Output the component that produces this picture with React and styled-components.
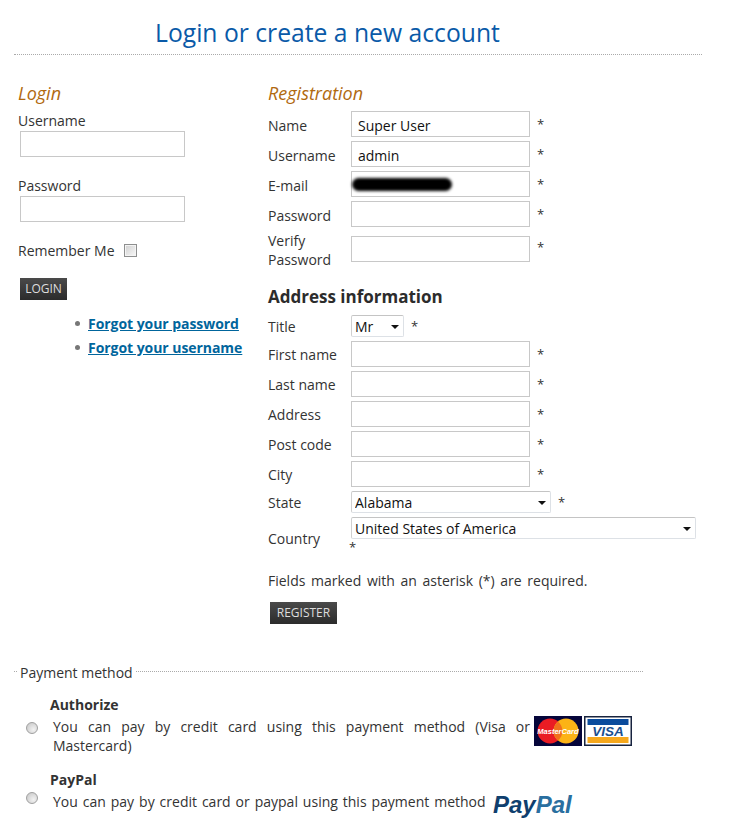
import styled, { createGlobalStyle } from 'styled-components'

const GlobalStyle = createGlobalStyle`
  html, body { margin: 0; padding: 0; background: #fff; }
  body {
    font-family: "Open Sans", "Liberation Sans", sans-serif;
    font-size: 14px;
    color: #333;
  }
`

const Page = styled.div`
  width: 735px;
  height: 823px;
  overflow: hidden;
  box-sizing: border-box;
  padding-top: 17px;
`

const Title = styled.h1`
  margin: 0 33px 0 14px;
  padding: 0 0 5px 141px;
  height: 32px;
  font-size: 24.7px;
  line-height: 32px;
  font-weight: 400;
  color: #0a5aa8;
  border-bottom: 1px dotted #aaa;
`

const Columns = styled.div`
  display: flex;
  padding: 26px 0 0 18px;
  height: 609px;
  box-sizing: border-box;
`

const LoginCol = styled.div`
  width: 250px;
  flex: none;
`

const RegCol = styled.div`
  width: 430px;
  flex: none;
`

const SubHead = styled.h2`
  margin: 0 0 6px;
  font-size: 18px;
  line-height: 24px;
  font-weight: 400;
  font-style: italic;
  color: #b0690f;
`

const StackLabel = styled.label`
  display: block;
  line-height: 20px;
  height: 20px;
`

const Input = styled.input`
  display: block;
  box-sizing: border-box;
  width: ${p => p.$w || 179}px;
  height: 26px;
  margin: 0;
  padding: 2px 6px 0;
  border: 1px solid #c8c8c8;
  background: #fff;
  font: inherit;
  color: #111;
  outline: none;
`

const LoginField = styled.div`
  margin-bottom: 19px;
  ${Input} { margin: 0 0 0 2px; }
`

const RememberRow = styled.div`
  display: flex;
  align-items: center;
  gap: 9px;
  height: 20px;
  margin-top: -1px;
`

const Check = styled.input`
  appearance: none;
  box-sizing: border-box;
  width: 13px;
  height: 13px;
  margin: 0;
  border: 1px solid #8e8f8f;
  background: linear-gradient(135deg, #d0d0d0, #f8f8f8);
  box-shadow: inset 0 0 0 1px #f4f4f4;
`

const DarkButton = styled.button`
  display: block;
  height: 22px;
  width: ${p => p.$w}px;
  margin: ${p => p.$m};
  padding: 0;
  border: 0;
  background: linear-gradient(#4a4a4a, #2b2b2b);
  color: #ddd;
  font-family: inherit;
  font-size: 12px;
  line-height: 22px;
  text-align: center;
`

const LinkList = styled.ul`
  margin: 12px 0 0;
  padding: 0 0 0 70px;
  list-style: none;
`

const LinkItem = styled.li`
  position: relative;
  height: 24px;
  line-height: 24px;
  &::before {
    content: '';
    position: absolute;
    left: -13px;
    top: 9px;
    width: 5px;
    height: 5px;
    border-radius: 50%;
    background: #777;
  }
`

const HelpLink = styled.a`
  color: #00659c;
  font-weight: 700;
  font-size: 14px;
  letter-spacing: -0.05px;
  text-decoration: underline;
`

const Row = styled.div`
  display: flex;
  align-items: ${p => p.$top ? 'flex-start' : 'center'};
  height: ${p => p.$h || 26}px;
  margin-bottom: ${p => p.$mb ?? 4}px;
`

const RowLabel = styled.label`
  width: 83px;
  flex: none;
  line-height: 19px;
  margin-top: ${p => p.$mt ?? 0}px;
`

const Star = styled.span`
  margin-left: ${p => p.$ml || 7}px;
  margin-top: ${p => p.$mt ?? -1}px;
  font-size: 13px;
`

const FieldWrap = styled.div`
  position: relative;
`

const BlurMark = styled.div`
  position: absolute;
  left: 1px;
  top: 7px;
  width: 100px;
  height: 13px;
  border-radius: 7px;
  background: #000;
  filter: blur(1.5px);
`

const AddressHead = styled.h3`
  margin: 11px 0 6px;
  font-size: 17px;
  line-height: 24px;
  font-weight: 700;
  color: #2c2c2c;
`

const SelectBox = styled.div`
  position: relative;
  width: ${p => p.$w}px;
  &::after {
    content: '';
    position: absolute;
    right: 5px;
    top: 10px;
    border-left: 4px solid transparent;
    border-right: 4px solid transparent;
    border-top: 4px solid #111;
    pointer-events: none;
  }
`

const Select = styled.select`
  appearance: none;
  display: block;
  box-sizing: border-box;
  width: 100%;
  height: 22px;
  margin: 0;
  padding: 0 0 0 3px;
  border: 1px solid #dde1e6;
  border-top-color: #c4c4c4;
  border-left-color: #d0d0d0;
  border-radius: 2px;
  background: #fff;
  font: inherit;
  color: #111;
`

const CountryStar = styled.div`
  margin: -1px 0 0 81px;
  height: 18px;
  line-height: 18px;
  font-size: 13px;
`

const Note = styled.p`
  margin: 15px 0 0;
  line-height: 20px;
  word-spacing: 2px;
`

const PaymentHead = styled.div`
  position: relative;
  margin: 0 92px 0 14px;
  height: 18px;
  &::before {
    content: '';
    position: absolute;
    left: 0;
    right: 0;
    top: 7px;
    border-top: 1px dotted #aaa;
  }
`

const PaymentTitle = styled.span`
  position: relative;
  top: -1px;
  margin-left: 4px;
  padding: 0 2px;
  background: #fff;
  line-height: 18px;
`

const Method = styled.div`
  margin: ${p => p.$mt}px 0 0 26px;
  width: 606px;
  display: grid;
  grid-template-columns: 27px 1fr;
`

const MethodName = styled.div`
  grid-column: 1 / 3;
  padding-left: 24px;
  font-weight: 700;
  line-height: 20px;
`

const Radio = styled.input`
  appearance: none;
  align-self: start;
  width: 12px;
  height: 12px;
  margin: ${p => p.$m};
  border: 1px solid #a0a0a0;
  border-radius: 50%;
  background: radial-gradient(circle at 65% 65%, #f2f2f2, #c4c4c4);
`

const MethodText = styled.div`
  line-height: 19px;
  padding-top: 2px;
  text-align: justify;
`

const PayPalText = styled.div`
  display: flex;
  align-items: flex-start;
  line-height: 19px;
  padding-top: 2px;
  word-spacing: 1.3px;
  white-space: nowrap;
`

const CardLogos = styled.span`
  float: right;
  display: flex;
  gap: 2px;
  margin: -1px 0 0 4px;
`

const PayPalMark = styled.span`
  display: inline-flex;
  margin: -1px 0 0 7px;
`

function MasterCardLogo() {
  return (
    <svg width="48" height="30" viewBox="0 0 48 30">
      <rect width="48" height="30" fill="#05053a" />
      <circle cx="16" cy="15" r="12.5" fill="#ea1c24" />
      <circle cx="32" cy="15" r="12.5" fill="#fcb316" />
      <path d="M24 5.5a12.5 12.5 0 0 1 0 19a12.5 12.5 0 0 1 0-19z" fill="#f0701c" />
      <text x="24" y="17.5" fontSize="7.5" fontWeight="700" fontStyle="italic" fill="#fff" textAnchor="middle" fontFamily="Liberation Sans">MasterCard</text>
    </svg>
  )
}

function VisaLogo() {
  return (
    <svg width="48" height="30" viewBox="0 0 48 30">
      <rect width="48" height="30" fill="#17233f" />
      <rect x="1.5" y="1.5" width="45" height="27" fill="#fff" />
      <rect x="3.5" y="3" width="41" height="6" fill="#0a4b9c" />
      <rect x="3.5" y="21" width="41" height="6" fill="#f6a81c" />
      <text x="24" y="20" fontSize="13.5" fontWeight="700" fontStyle="italic" fill="#1a4f8f" textAnchor="middle" fontFamily="Liberation Sans">VISA</text>
    </svg>
  )
}

function PayPalLogo() {
  return (
    <svg width="86" height="29" viewBox="0 0 86 29">
      <text y="22" fontSize="24" fontWeight="700" fontStyle="italic" fontFamily="Liberation Sans">
        <tspan fill="#0f3f6e">Pay</tspan><tspan fill="#2a6fa0">Pal</tspan>
      </text>
    </svg>
  )
}

const fieldRows = ['First name', 'Last name', 'Address', 'Post code', 'City']

export default function App() {
  return (
    <Page>
      <GlobalStyle />
      <Title>Login or create a new account</Title>
      <Columns>
        <LoginCol>
          <SubHead>Login</SubHead>
          <LoginField>
            <StackLabel>Username</StackLabel>
            <Input $w={165} />
          </LoginField>
          <LoginField>
            <StackLabel>Password</StackLabel>
            <Input $w={165} type="password" />
          </LoginField>
          <RememberRow>
            Remember Me
            <Check type="checkbox" />
          </RememberRow>
          <DarkButton $w={47} $m="18px 0 0 2px">LOGIN</DarkButton>
          <LinkList>
            <LinkItem><HelpLink href="#">Forgot your password</HelpLink></LinkItem>
            <LinkItem><HelpLink href="#">Forgot your username</HelpLink></LinkItem>
          </LinkList>
        </LoginCol>
        <RegCol>
          <SubHead>Registration</SubHead>
          <Row>
            <RowLabel $mt={2}>Name</RowLabel>
            <Input defaultValue="Super User" />
            <Star>*</Star>
          </Row>
          <Row>
            <RowLabel $mt={2}>Username</RowLabel>
            <Input defaultValue="admin" />
            <Star>*</Star>
          </Row>
          <Row>
            <RowLabel $mt={2}>E-mail</RowLabel>
            <FieldWrap>
              <Input />
              <BlurMark />
            </FieldWrap>
            <Star>*</Star>
          </Row>
          <Row $mb={9}>
            <RowLabel $mt={2}>Password</RowLabel>
            <Input type="password" />
            <Star>*</Star>
          </Row>
          <Row $top $h={38} $mb={0}>
            <RowLabel $mt={-5}>Verify Password</RowLabel>
            <Input type="password" />
            <Star $mt={2}>*</Star>
          </Row>
          <AddressHead>Address information</AddressHead>
          <Row $h={22}>
            <RowLabel>Title</RowLabel>
            <SelectBox $w={53}>
              <Select defaultValue="Mr"><option>Mr</option></Select>
            </SelectBox>
            <Star>*</Star>
          </Row>
          {fieldRows.map(label => (
            <Row key={label}>
              <RowLabel>{label}</RowLabel>
              <Input />
              <Star>*</Star>
            </Row>
          ))}
          <Row $h={22}>
            <RowLabel>State</RowLabel>
            <SelectBox $w={200}>
              <Select defaultValue="Alabama"><option>Alabama</option></Select>
            </SelectBox>
            <Star>*</Star>
          </Row>
          <Row $h={22} $mb={0}>
            <RowLabel $mt={20}>Country</RowLabel>
            <SelectBox $w={345}>
              <Select defaultValue="United States of America"><option>United States of America</option></Select>
            </SelectBox>
          </Row>
          <CountryStar>*</CountryStar>
          <Note>Fields marked with an asterisk (*) are required.</Note>
          <DarkButton $w={67} $m="11px 0 0 2px">REGISTER</DarkButton>
        </RegCol>
      </Columns>
      <PaymentHead>
        <PaymentTitle>Payment method</PaymentTitle>
      </PaymentHead>
      <Method $mt={13}>
        <MethodName>Authorize</MethodName>
        <Radio type="radio" name="pay" $m="7px 0 0 0" />
        <MethodText>
          <CardLogos><MasterCardLogo /><VisaLogo /></CardLogos>
          You can pay by credit card using this payment method (Visa or Mastercard)
        </MethodText>
      </Method>
      <Method $mt={15}>
        <MethodName>PayPal</MethodName>
        <Radio type="radio" name="pay" $m="2px 0 0 0" />
        <PayPalText>
          You can pay by credit card or paypal using this payment method
          <PayPalMark><PayPalLogo /></PayPalMark>
        </PayPalText>
      </Method>
    </Page>
  )
}
